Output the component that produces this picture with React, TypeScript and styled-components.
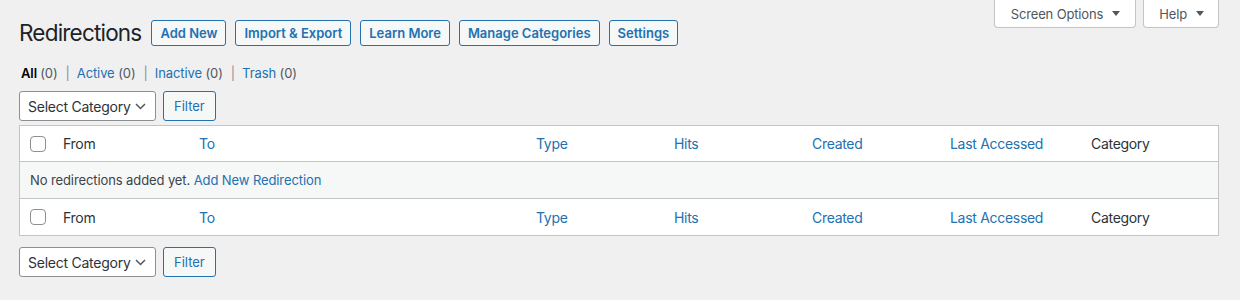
import React from "react"
import styled, { createGlobalStyle } from "styled-components"

const GlobalStyle = createGlobalStyle`
    html, body {
        margin: 0;
        padding: 0;
        background: #f0f0f1;
    }
    body {
        font-family: Inter, "Noto Sans", "Liberation Sans", sans-serif;
        font-size: 13px;
        color: #3c434a;
    }
`

const Wrap = styled.div`
    padding: 0 21px 0 19px;
`
const TopBar = styled.div`
    display: flex;
    justify-content: space-between;
    align-items: flex-start;
`
const TitleRow = styled.div`
    display: flex;
    align-items: center;
    padding-top: 18px;
    height: 30px;
`
const Title = styled.h1`
    margin: 0 6px 0 0;
    font-size: 22.5px;
    font-weight: 400;
    letter-spacing: -0.8px;
    line-height: 30px;
    color: #1d2327;
`
const TitleAction = styled.a`
    display: inline-block;
    margin-left: 4px;
    margin-right: 5px;
    padding: 0 8px;
    height: 24px;
    line-height: 24px;
    border: 1px solid #2271b1;
    border-radius: 3px;
    background: #f6f7f7;
    color: #2271b1;
    font-size: 13px;
    font-weight: 600;
    text-decoration: none;
`
const MetaLinks = styled.div`
    display: flex;
    gap: 7px;
`
const MetaTab = styled.button<{ $narrow?: boolean }>`
    display: flex;
    align-items: center;
    gap: 9px;
    height: 28px;
    padding: ${p => (p.$narrow ? "0 14px 0 15px" : "0 15px 0 16px")};
    border: 1px solid #c3c4c7;
    border-top: none;
    border-radius: 0 0 4px 4px;
    background: #fff;
    color: #50575e;
    font-family: inherit;
    font-size: 13px;
    letter-spacing: -0.15px;
`
const Triangle = styled.span`
    width: 0;
    height: 0;
    border-left: 4px solid transparent;
    border-right: 4px solid transparent;
    border-top: 5px solid #50575e;
`
const SubNav = styled.div`
    margin-top: 15px;
    margin-left: 2px;
    line-height: 20px;
    letter-spacing: -0.1px;
`
const NavLink = styled.a<{ $current?: boolean }>`
    color: ${p => (p.$current ? "#000" : "#2271b1")};
    font-weight: ${p => (p.$current ? 600 : 400)};
    text-decoration: none;
`
const Count = styled.span`
    color: #50575e;
    font-weight: 400;
`
const Sep = styled.span`
    margin: 0 7px 0 8px;
    color: #8c8f94;
`
const TableNav = styled.div<{ $top?: boolean }>`
    display: flex;
    gap: 7px;
    margin: ${p => (p.$top ? "8px 0 4px" : "11px 0 0")};
`
const Select = styled.div`
    display: flex;
    align-items: center;
    justify-content: space-between;
    box-sizing: border-box;
    width: 137px;
    height: 30px;
    padding: 0 9px 0 8px;
    border: 1px solid #8c8f94;
    border-radius: 3px;
    background: #fff;
    color: #2c3338;
    font-size: 14px;
    letter-spacing: -0.25px;
`
const FilterButton = styled.button`
    box-sizing: border-box;
    height: 30px;
    padding: 0 10px;
    border: 1px solid #2271b1;
    border-radius: 3px;
    background: #f6f7f7;
    color: #2271b1;
    font-family: inherit;
    font-size: 13px;
`
const Table = styled.div`
    border: 1px solid #c3c4c7;
    background: #fff;
`
const Row = styled.div<{ $striped?: boolean; $last?: boolean; $height?: number }>`
    display: grid;
    grid-template-columns: 33px 136px 337px 138px 138px 138px 141px 1fr;
    align-items: center;
    height: ${p => p.$height ?? 36}px;
    background: ${p => (p.$striped ? "#f6f7f7" : "#fff")};
    border-bottom: ${p => (p.$last ? "none" : "1px solid #c3c4c7")};
`
const Cell = styled.div<{ $link?: boolean }>`
    padding: 0 10px;
    font-size: 14px;
    letter-spacing: -0.3px;
    color: ${p => (p.$link ? "#2271b1" : "#2c3338")};
`
const CheckCell = styled.div`
    padding-left: 10px;
    display: flex;
`
const Checkbox = styled.span`
    box-sizing: border-box;
    width: 16px;
    height: 16px;
    border: 1px solid #8c8f94;
    border-radius: 4px;
    background: #fff;
`
const EmptyCell = styled.div`
    grid-column: 1 / -1;
    padding-left: 10px;
    font-size: 13px;
    letter-spacing: -0.1px;
    color: #3c434a;

    a {
        color: #2271b1;
        text-decoration: none;
    }
`

const columns = [
    { label: "From", link: false },
    { label: "To", link: true },
    { label: "Type", link: true },
    { label: "Hits", link: true },
    { label: "Created", link: true },
    { label: "Last Accessed", link: true },
    { label: "Category", link: false },
]

const Chevron = () => (
    <svg width="11" height="7" viewBox="0 0 11 7" fill="none">
        <path d="M1 1l4.5 4.5L10 1" stroke="#50575e" strokeWidth="1.5" />
    </svg>
)

const TableControls = ({ top }: { top?: boolean }) => (
    <TableNav $top={top}>
        <Select>
            Select Category
            <Chevron />
        </Select>
        <FilterButton>Filter</FilterButton>
    </TableNav>
)

const HeaderRow = ({ last }: { last?: boolean }) => (
    <Row $last={last} $height={last ? 36 : 35}>
        <CheckCell>
            <Checkbox />
        </CheckCell>
        {columns.map(c => (
            <Cell key={c.label} $link={c.link}>{c.label}</Cell>
        ))}
    </Row>
)

const App = () => {
    return (
        <Wrap>
            <GlobalStyle />
            <TopBar>
                <TitleRow>
                    <Title>Redirections</Title>
                    <TitleAction>Add New</TitleAction>
                    <TitleAction>Import &amp; Export</TitleAction>
                    <TitleAction>Learn More</TitleAction>
                    <TitleAction>Manage Categories</TitleAction>
                    <TitleAction>Settings</TitleAction>
                </TitleRow>
                <MetaLinks>
                    <MetaTab>Screen Options <Triangle /></MetaTab>
                    <MetaTab $narrow>Help <Triangle /></MetaTab>
                </MetaLinks>
            </TopBar>

            <SubNav>
                <NavLink $current>All <Count>(0)</Count></NavLink>
                <Sep>|</Sep>
                <NavLink>Active <Count>(0)</Count></NavLink>
                <Sep>|</Sep>
                <NavLink>Inactive <Count>(0)</Count></NavLink>
                <Sep>|</Sep>
                <NavLink>Trash <Count>(0)</Count></NavLink>
            </SubNav>

            <TableControls top />

            <Table>
                <HeaderRow />
                <Row $striped>
                    <EmptyCell>
                        No redirections added yet. <a>Add New Redirection</a>
                    </EmptyCell>
                </Row>
                <HeaderRow last />
            </Table>

            <TableControls />
        </Wrap>
    )
}

export default App
